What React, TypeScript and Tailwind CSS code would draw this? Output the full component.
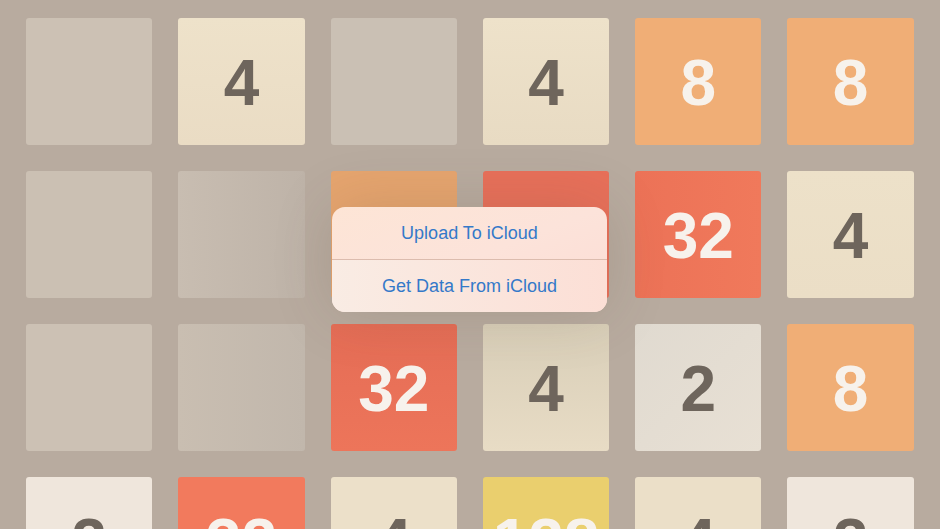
const DARK = 'text-[#6e655c]';
const LIGHT = 'text-[#f7f2ec]';

type Tile = { value?: number; bg: string; fg?: string };

// 16 and 64 in row 2 sit under the sheet, so their numbers are not drawn
const rows: Tile[][] = [
  [
    { bg: 'bg-[#ccc1b4]' },
    { value: 4, bg: 'bg-gradient-to-b from-[#eee2ca] to-[#eadcc4]', fg: DARK },
    { bg: 'bg-[#cac0b4]' },
    { value: 4, bg: 'bg-gradient-to-b from-[#eee2ca] to-[#e8dbc3]', fg: DARK },
    { value: 8, bg: 'bg-[#f0ae76]', fg: LIGHT },
    { value: 8, bg: 'bg-[#f0ae76]', fg: LIGHT },
  ],
  [
    { bg: 'bg-[#cbc0b3]' },
    { bg: 'bg-gradient-to-r from-[#c8bdb1] to-[#beb3a8]' },
    { bg: 'bg-[#e6a56f]' },
    { bg: 'bg-[#e8705a]' },
    { value: 32, bg: 'bg-gradient-to-r from-[#ec7257] to-[#f0795b]', fg: LIGHT },
    { value: 4, bg: 'bg-gradient-to-b from-[#ede1c9] to-[#ebdec6]', fg: DARK },
  ],
  [
    { bg: 'bg-[#ccc1b4]' },
    { bg: 'bg-gradient-to-r from-[#c9beb1] to-[#c1b7ac]' },
    { value: 32, bg: 'bg-gradient-to-b from-[#e56d56] to-[#ed755a]', fg: LIGHT },
    { value: 4, bg: 'bg-gradient-to-b from-[#d8ceb8] to-[#e8dcc5]', fg: DARK },
    { value: 2, bg: 'bg-gradient-to-br from-[#e0dad0] to-[#e8e0d4]', fg: DARK },
    { value: 8, bg: 'bg-[#f0ae76]', fg: LIGHT },
  ],
  [
    { value: 2, bg: 'bg-[#efe6dc]', fg: DARK },
    { value: 32, bg: 'bg-[#f27a5d]', fg: LIGHT },
    { value: 4, bg: 'bg-[#ece0c9]', fg: DARK },
    { value: 128, bg: 'bg-[#eacf6e]', fg: LIGHT },
    { value: 4, bg: 'bg-[#ebdfc8]', fg: DARK },
    { value: 2, bg: 'bg-[#efe6dc]', fg: DARK },
  ],
];

function Cell({ tile }: { tile: Tile }) {
  return (
    <div className={`w-[126.3px] h-[127px] rounded-[3px] flex items-center justify-center ${tile.bg}`}>
      {tile.value !== undefined && (
        <span className={`text-[64px] leading-none font-bold pt-[2px] ${tile.fg}`}>{tile.value}</span>
      )}
    </div>
  );
}

export default function App() {
  return (
    <div
      className="relative w-[940px] h-[529px] overflow-hidden bg-[#b8ab9f]"
      style={{ fontFamily: '"Liberation Sans", Arial, sans-serif' }}
    >
      <div className="pl-[26px] pt-[18px] flex flex-col gap-[26px]">
        {rows.map((row, r) => (
          <div key={r} className="flex gap-[26px]">
            {row.map((tile, c) => (
              <Cell key={c} tile={tile} />
            ))}
          </div>
        ))}
      </div>

      {/* action sheet */}
      <div className="absolute left-[332px] top-[207px] w-[275px] h-[105px] rounded-[13px] overflow-hidden bg-gradient-to-br from-[#fde5d6] via-[#fce3da] to-[#fcdcd4] shadow-[0_0_60px_rgba(90,70,55,0.18)] flex flex-col">
        <div className="h-[52px] flex items-center justify-center text-[18px] text-[#3479c9]">
          Upload To iCloud
        </div>
        <div className="h-px bg-[#dcbcae]" />
        <div className="flex-1 flex items-center justify-center text-[18px] text-[#3479c9] bg-gradient-to-r from-[#f9ece4] to-[#fcdfd6]">
          Get Data From iCloud
        </div>
      </div>
    </div>
  );
}
